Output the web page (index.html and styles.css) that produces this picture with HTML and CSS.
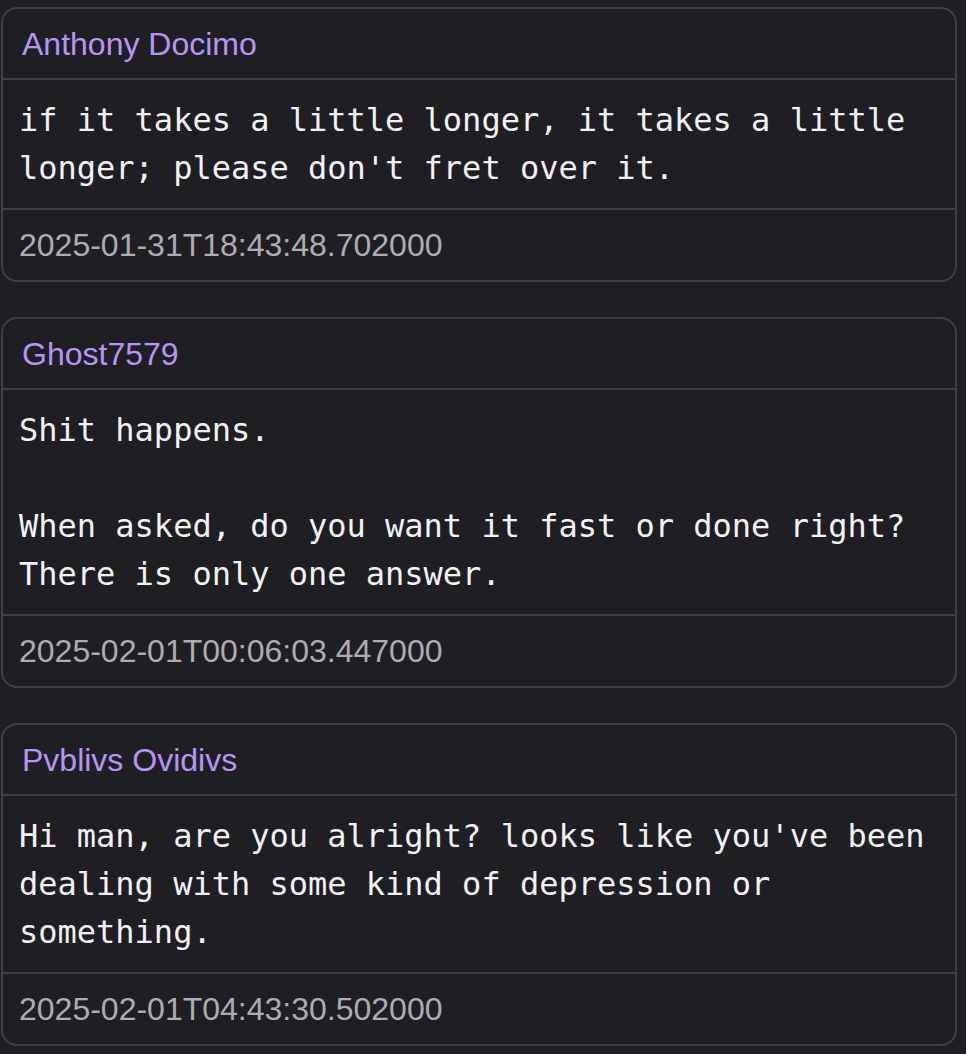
FILE: index.html
```html
<!DOCTYPE html>
<html lang="en">
<head>
<meta charset="utf-8">
<title>Comments</title>
<link rel="stylesheet" href="styles.css">
</head>
<body>
<div class="list">
  <article class="card">
    <header class="card-head">Anthony Docimo</header>
    <div class="card-body">if it takes a little longer, it takes a little longer; please don't fret over it.</div>
    <footer class="card-foot">2025-01-31T18:43:48.702000</footer>
  </article>
  <article class="card">
    <header class="card-head">Ghost7579</header>
    <div class="card-body">Shit happens.

When asked, do you want it fast or done right? There is only one answer.</div>
    <footer class="card-foot">2025-02-01T00:06:03.447000</footer>
  </article>
  <article class="card">
    <header class="card-head">Pvblivs Ovidivs</header>
    <div class="card-body">Hi man, are you alright? looks like you've been dealing with some kind of depression or something.</div>
    <footer class="card-foot">2025-02-01T04:43:30.502000</footer>
  </article>
</div>
</body>
</html>
```

FILE: styles.css
```css
html, body {
  margin: 0;
  padding: 0;
  background: #1f1f23;
}

.list {
  display: flex;
  flex-direction: column;
  gap: 35px;
  padding: 7px 9px 0 1px;
}

.card {
  border: 2px solid #3e3e46;
  border-radius: 16px;
  background: #1f1f23;
  overflow: hidden;
}

.card-head {
  font-family: "Liberation Sans", Arial, sans-serif;
  font-size: 32px;
  line-height: 37px;
  padding: 17px 19px 15px;
  color: #b794f4;
  border-bottom: 2px solid #3e3e46;
}

.card-body {
  font-family: "DejaVu Sans Mono", monospace;
  font-size: 32px;
  line-height: 48px;
  padding: 16px 16px;
  color: #f2f2f4;
  white-space: pre-wrap;
  border-bottom: 2px solid #3e3e46;
}

.card-foot {
  font-family: "Liberation Sans", Arial, sans-serif;
  font-size: 32px;
  line-height: 38px;
  padding: 16px 16px;
  color: #acacb2;
}
```
